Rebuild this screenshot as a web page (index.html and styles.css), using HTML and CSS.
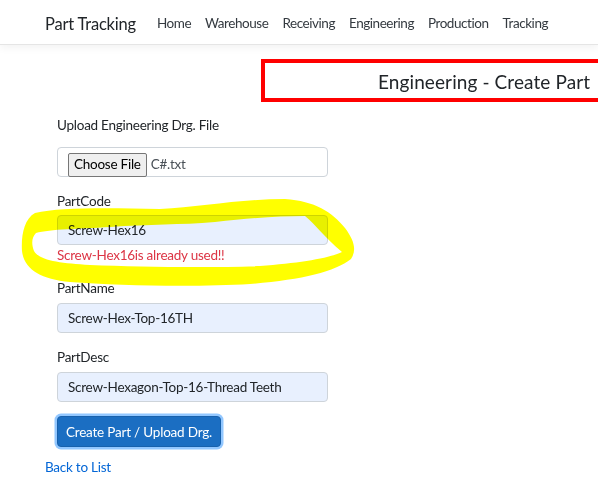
FILE: index.html
```html
<!DOCTYPE html>
<html>
<head>
<meta charset="utf-8">
<link rel="stylesheet" href="styles.css">
</head>
<body>
<header class="topbar">
  <nav class="nav">
    <a class="brand">Part Tracking</a>
    <a class="nav-link">Home</a>
    <a class="nav-link">Warehouse</a>
    <a class="nav-link">Receiving</a>
    <a class="nav-link">Engineering</a>
    <a class="nav-link">Production</a>
    <a class="nav-link">Tracking</a>
  </nav>
</header>
<main class="main">
  <div class="title-box"><h1 class="title">Engineering - Create Part</h1></div>
  <form class="form">
    <div class="group group-file">
      <label class="label label-file">Upload Engineering Drg. File</label>
      <div class="file-input"><span class="file-btn">Choose File</span><span class="file-name">C#.txt</span></div>
    </div>
    <div class="group group-code">
      <label class="label">PartCode</label>
      <div class="input">Screw-Hex16</div>
      <span class="error">Screw-Hex16is already used!!</span>
    </div>
    <div class="group">
      <label class="label">PartName</label>
      <div class="input">Screw-Hex-Top-16TH</div>
    </div>
    <div class="group">
      <label class="label">PartDesc</label>
      <div class="input">Screw-Hexagon-Top-16-Thread Teeth</div>
    </div>
    <div class="group-btn">
      <button type="button" class="btn">Create Part / Upload Drg.</button>
    </div>
  </form>
  <a class="back">Back to List</a>
  <svg class="scribble" width="598" height="487" viewBox="0 0 598 487">
    <path fill-rule="evenodd" fill="#ffff00" d="
      M35 213 C60 207 110 208 160 209 C200 207 240 199 285 199 C315 201 332 212 345 228 C354 240 357 250 351 259 C335 272 300 280 250 284 C200 287 120 286 70 282 C40 279 24 269 22 251 C21 236 24 219 35 213 Z
      M36 233 C50 229 80 229 110 227 C150 224 180 225 215 222 C250 218 280 216 305 216 C315 224 325 238 342 252 C330 258 300 263 260 266 C210 268 140 267 90 265 C60 263 40 261 34 251 C31 243 32 237 36 233 Z"/>
  </svg>
</main>
</body>
</html>
```
FILE: styles.css
```css
html, body {
  margin: 0;
  padding: 0;
}
body {
  font-family: Lato, "Liberation Sans", sans-serif;
  font-size: 13.5px;
  letter-spacing: -0.25px;
  line-height: 21px;
  color: #212529;
  background: #fff;
  overflow: hidden;
  width: 598px;
  height: 487px;
  position: relative;
}
a { text-decoration: none; }
.topbar {
  height: 44px;
  border-bottom: 1px solid #e5e5e5;
  box-shadow: 0 3px 8px rgba(0,0,0,0.05);
  background: #fff;
}
.nav {
  display: flex;
  align-items: center;
  height: 44px;
  padding-left: 45px;
  padding-top: 3px;
  box-sizing: border-box;
  white-space: nowrap;
}
.brand {
  font-size: 16.5px;
  letter-spacing: -0.2px;
  color: #212529;
  margin-right: 14px;
  line-height: 26px;
  flex-shrink: 0;
}
.nav-link {
  color: #343a40;
  padding: 0 7px;
  letter-spacing: -0.45px;
  flex-shrink: 0;
}
.main {
  padding-left: 45px;
}
.title-box {
  margin-top: 14px;
  margin-left: 216px;
  width: 400px;
  height: 35px;
  border: 4px solid #ff0000;
  box-sizing: content-box;
}
.title {
  margin: 0;
  padding-left: 113px;
  font-size: 19px;
  letter-spacing: 0.1px;
  font-weight: 400;
  line-height: 37px;
  white-space: nowrap;
  color: #212529;
}
.form {
  width: 271px;
  padding-left: 12px;
  margin-top: 13px;
}
.group {
  margin-bottom: 14px;
}
.label {
  display: block;
  margin-bottom: 4px;
}
.label-file {
  margin-bottom: 11px;
}
.group-file {
  margin-bottom: 14px;
}
.file-input {
  height: 30px;
  border: 1px solid #ced4da;
  border-radius: 4px;
  box-sizing: border-box;
  display: flex;
  align-items: flex-end;
  padding-left: 10px;
}
.file-btn {
  display: inline-block;
  box-sizing: border-box;
  height: 24px;
  line-height: 21px;
  padding: 0 5px;
  background: #efefef;
  border: 1px solid #767676;
  border-radius: 2px;
  color: #000;
  font-size: 13.5px;
  margin-bottom: -1px;
}
.file-name {
  margin-left: 4px;
  color: #495057;
  line-height: 23px;
}
.input {
  height: 30px;
  box-sizing: border-box;
  border: 1px solid #ced4da;
  border-radius: 4px;
  background: #e8f0fe;
  padding-left: 10px;
  line-height: 28px;
  color: #212529;
}
.group-code .label {
  margin-bottom: 3px;
}
.group-code {
  margin-bottom: 12px;
}
.error {
  display: block;
  color: #dc3545;
  line-height: 21px;
}
.group-btn {
  margin-bottom: 0;
}
.btn {
  font-family: Lato, "Liberation Sans", sans-serif;
  font-size: 13.5px;
  letter-spacing: -0.2px;
  color: #fff;
  background: #1b6ec2;
  border: 1px solid #1861ac;
  border-radius: 4px;
  height: 31px;
  width: 164px;
  padding: 0;
  box-shadow: 0 0 0 2.5px rgba(38,143,255,0.5);
}
.back {
  display: block;
  margin-top: 10px;
  color: #0366d6;
  width: max-content;
}
.scribble {
  position: absolute;
  left: 0;
  top: 0;
  pointer-events: none;
  mix-blend-mode: multiply;
}
```
